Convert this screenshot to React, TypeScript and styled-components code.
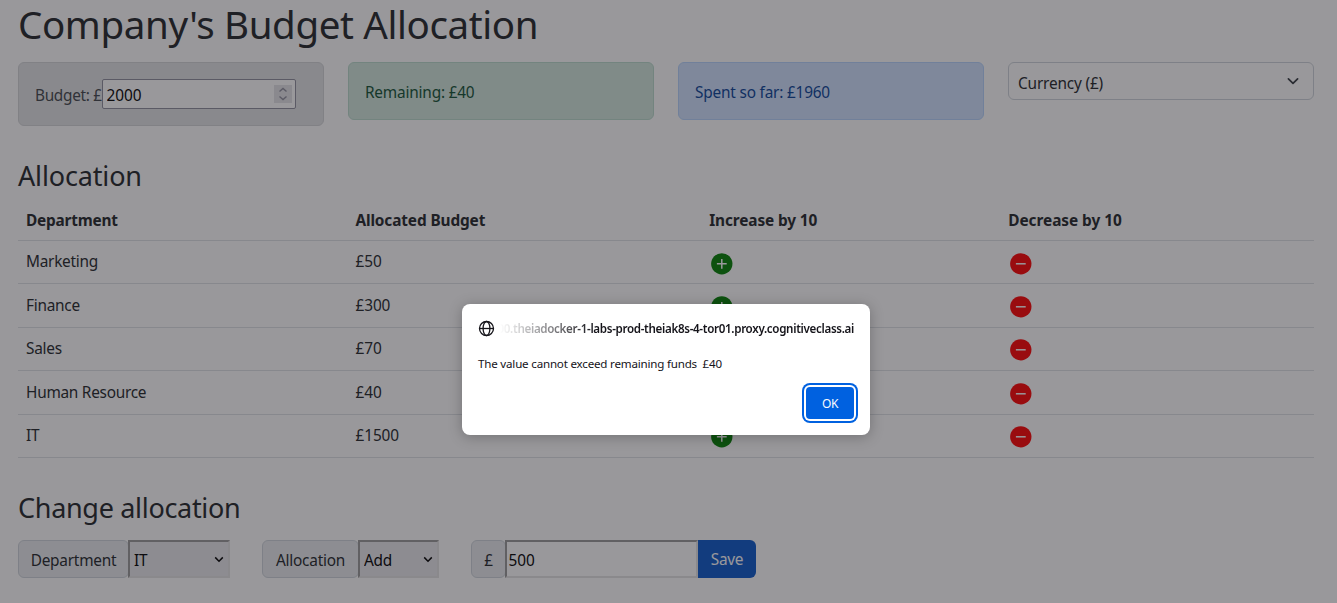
import React from "react";
import styled, { createGlobalStyle } from "styled-components";

const Global = createGlobalStyle`
  *, *::before, *::after { box-sizing: border-box; }
  html, body { margin: 0; height: 603px; overflow: hidden; background: #fff; }
  body {
    font-family: "Noto Sans", "Open Sans", sans-serif;
    font-size: 15.4px;
    line-height: 24px;
    letter-spacing: -0.24px;
    color: #212529;
  }
  input, select, button { font: inherit; letter-spacing: inherit; }
`;

const Page = styled.main`
  width: 1296px;
  margin-left: 18px;
`;

const Title = styled.h1`
  margin: 0 0 14px;
  font-size: 38.5px;
  font-weight: 400;
  line-height: 48px;
  letter-spacing: -0.38px;
  white-space: nowrap;
`;

const Section = styled.h3<{ $top: number; $bottom: number; $spacing: number }>`
  margin: ${(p) => p.$top}px 0 ${(p) => p.$bottom}px;
  font-size: 27px;
  font-weight: 400;
  line-height: 33.6px;
  letter-spacing: ${(p) => p.$spacing}px;
`;

const Summary = styled.div`
  display: grid;
  grid-template-columns: repeat(4, 306px);
  gap: 24px;
  align-items: start;
`;

const tones = {
  secondary: { bg: "#e2e3e5", border: "#d3d6d8", text: "#41464b" },
  success: { bg: "#d1e7dd", border: "#badbcc", text: "#0f5132" },
  primary: { bg: "#cfe2ff", border: "#b6d4fe", text: "#084298" },
};

const Alert = styled.div<{ $tone: keyof typeof tones; $height: number }>`
  display: flex;
  align-items: center;
  height: ${(p) => p.$height}px;
  padding: 4px 16px 0;
  border: 1px solid ${(p) => tones[p.$tone].border};
  border-radius: 6px;
  background: ${(p) => tones[p.$tone].bg};
  color: ${(p) => tones[p.$tone].text};
  letter-spacing: -0.2px;
  white-space: nowrap;
`;

const BudgetLabel = styled.span`
  width: 67px;
  letter-spacing: -0.33px;
`;

const BudgetField = styled.span`
  display: flex;
  align-items: center;
  width: 194px;
  height: 30px;
  margin-top: -4px;
  padding: 0 3px;
  border: 1px solid #8f8f9d;
  border-radius: 2px;
  background: #fff;
  color: #000;
`;

const BareInput = styled.input`
  flex: 1;
  min-width: 0;
  padding: 3px 0 0 0.6px;
  border: 0;
  outline: 0;
  background: transparent;
  color: #000;
  letter-spacing: -0.1px;
`;

const Spinner = styled.span`
  display: flex;
  width: 18px;
  height: 18px;
  background: #e4e4e8;
`;

const CurrencySelect = styled.div`
  display: flex;
  align-items: center;
  justify-content: space-between;
  height: 38px;
  padding: 5px 12px 0 9px;
  border: 1px solid #ced4da;
  border-radius: 6px;
  letter-spacing: -0.18px;
  svg { margin-top: -6px; }
`;

const Table = styled.table`
  width: 1296px;
  border-collapse: separate;
  border-spacing: 0;
  table-layout: fixed;
`;
const Head = styled.th<{ $width: number; $spacing: number }>`
  width: ${(p) => p.$width}px;
  height: 41.5px;
  padding: 3px 8px 0;
  border-bottom: 1px solid #dee2e6;
  text-align: left;
  font-weight: 700;
  font-size: 15.4px;
  letter-spacing: ${(p) => p.$spacing}px;
`;
const Cell = styled.td<{ $money?: boolean }>`
  height: 43.4px;
  padding: 0.4px 8px 0;
  border-bottom: 1px solid #dee2e6;
  letter-spacing: ${(p) => (p.$money ? "-0.06px" : "-0.27px")};
  svg { display: block; margin-top: 2px; }
`;

const Form = styled.div`
  display: flex;
  height: 38px;
`;
const Group = styled.div<{ $gap?: number }>`
  display: flex;
  margin-right: ${(p) => p.$gap ?? 0}px;
`;
const Addon = styled.label<{ $width: number }>`
  display: flex;
  align-items: center;
  justify-content: center;
  width: ${(p) => p.$width}px;
  padding-top: 3px;
  border: 1px solid #ced4da;
  border-radius: 6px;
  background: #e9ecef;
`;
const Field = styled.div<{ $width: number; $select?: boolean }>`
  display: flex;
  align-items: center;
  width: ${(p) => p.$width}px;
  margin-left: -1px;
  padding: 0 4px 0 ${(p) => (p.$select ? 2 : 1)}px;
  border: 2px solid;
  border-color: #999 #e3e3e3 #e3e3e3 #999;
  background: ${(p) => (p.$select ? "#e9e9ed" : "#fff")};
`;
const BareSelect = styled.select`
  flex: 1;
  min-width: 0;
  appearance: none;
  padding: 3px 2px 0;
  border: 0;
  outline: 0;
  background: transparent;
  color: #000;
`;
const SaveButton = styled.button`
  width: 58px;
  padding: 2px 0 0;
  border: 0;
  border-radius: 0 6px 6px 0;
  background: #0a58ca;
  color: #fff;
`;

const Backdrop = styled.div`
  position: absolute;
  inset: 0;
  height: 603px;
  background: rgba(28, 27, 34, 0.45);
`;
const Dialog = styled.div`
  position: absolute;
  left: 462px;
  top: 304px;
  display: flex;
  flex-direction: column;
  width: 408px;
  height: 131px;
  padding: 16px;
  border-radius: 8px;
  background: #fff;
  color: #15141a;
  font-size: 11.6px;
  line-height: 16px;
  white-space: pre;
  box-shadow: 0 2px 14px rgba(0, 0, 0, 0.25);
`;
const Origin = styled.div`
  display: flex;
  align-items: center;
  justify-content: space-between;
  height: 17px;
`;
const Host = styled.div`
  display: flex;
  justify-content: flex-end;
  width: 354px;
  overflow: hidden;
  font-weight: 600;
  letter-spacing: -0.32px;
  mask-image: linear-gradient(to right, transparent 0, #000 96px);
`;
const Message = styled.div`
  margin-top: 19px;
  letter-spacing: -0.2px;
`;
const OkButton = styled.button`
  align-self: flex-end;
  width: 48px;
  height: 32px;
  margin: 15px 0 0;
  padding: 1px 0 0;
  border: 0;
  border-radius: 4px;
  background: #0061e0;
  color: #fbfbfe;
  font-size: 12px;
  letter-spacing: -0.4px;
  box-shadow: 0 0 0 2px #fff, 0 0 0 4px #0061e0;
`;

const CircleIcon = ({ plus }: { plus?: boolean }) => (
  <svg width="25.6" height="25.6" viewBox="0 0 24 24">
    <circle cx="12" cy="12" r="10" fill={plus ? "green" : "red"} />
    <path
      d={plus ? "M7.4 11.3h3.9V7.4h1.4v3.9h3.9v1.4h-3.9v3.9h-1.4v-3.9H7.4z" : "M7.4 11.3h9.2v1.4H7.4z"}
      fill="#fff"
    />
  </svg>
);

const SelectArrow = () => (
  <svg width="10" height="8" viewBox="0 0 10 8" fill="none" stroke="#000" strokeWidth="1.5">
    <path d="M1.2 2.4L5 6.2l3.8-3.8" />
  </svg>
);

const rows = [
  ["Marketing", "£50"],
  ["Finance", "£300"],
  ["Sales", "£70"],
  ["Human Resource", "£40"],
  ["IT", "£1500"],
];

export default function App() {
  return (
    <>
      <Global />
      <Page>
        <Title>Company's Budget Allocation</Title>
        <Summary>
          <Alert $tone="secondary" $height={64}>
            <BudgetLabel>Budget: £</BudgetLabel>
            <BudgetField>
              <BareInput defaultValue="2000" />
              <Spinner>
                <svg width="18" height="18" viewBox="0 0 18 18" fill="none" stroke="#8f8f9d" strokeWidth="1.4">
                  <path d="M5.5 6.5L9 3.5l3.5 3M5.5 11.5l3.5 3 3.5-3" />
                </svg>
              </Spinner>
            </BudgetField>
          </Alert>
          <Alert $tone="success" $height={58}>Remaining: £40</Alert>
          <Alert $tone="primary" $height={58}>Spent so far: £1960</Alert>
          <CurrencySelect>
            Currency (£)
            <svg width="16" height="12" viewBox="0 0 16 12" fill="none" stroke="#343a40" strokeWidth="1.7" strokeLinecap="round" strokeLinejoin="round">
              <path d="M3.4 3.8L8 8.4l4.6-4.6" />
            </svg>
          </CurrencySelect>
        </Summary>

        <Section $top={33} $bottom={7} $spacing={-0.15}>Allocation</Section>
        <Table>
          <thead>
            <tr>
              <Head $width={329.4} $spacing={-0.2}>Department</Head>
              <Head $width={353.8} $spacing={-0.12}>Allocated Budget</Head>
              <Head $width={299} $spacing={-0.12}>Increase by 10</Head>
              <Head $width={313.8} $spacing={-0.04}>Decrease by 10</Head>
            </tr>
          </thead>
          <tbody>
            {rows.map(([name, amount]) => (
              <tr key={name}>
                <Cell>{name}</Cell>
                <Cell $money>{amount}</Cell>
                <Cell><CircleIcon plus /></Cell>
                <Cell><CircleIcon /></Cell>
              </tr>
            ))}
          </tbody>
        </Table>

        <Section $top={33} $bottom={15.4} $spacing={-0.31}>Change allocation</Section>
        <Form>
          <Group $gap={32}>
            <Addon $width={111}>Department</Addon>
            <Field $width={102} $select>
              <BareSelect><option>IT</option></BareSelect>
              <SelectArrow />
            </Field>
          </Group>
          <Group $gap={32}>
            <Addon $width={97}>Allocation</Addon>
            <Field $width={81} $select>
              <BareSelect><option>Add</option></BareSelect>
              <SelectArrow />
            </Field>
          </Group>
          <Group>
            <Addon $width={35}>£</Addon>
            <Field $width={193}><BareInput defaultValue="500" /></Field>
            <SaveButton>Save</SaveButton>
          </Group>
        </Form>
      </Page>
      <Backdrop />
      <Dialog>
        <Origin>
          <svg width="17" height="17" viewBox="0 0 17 17" fill="none" stroke="#15141a" strokeWidth="1.3">
            <circle cx="8.5" cy="8.5" r="7" />
            <ellipse cx="8.5" cy="8.5" rx="3.4" ry="7" />
            <path d="M1.5 8.5h14" />
          </svg>
          <Host>00.theiadocker-1-labs-prod-theiak8s-4-tor01.proxy.cognitiveclass.ai</Host>
        </Origin>
        <Message>{"The value cannot exceed remaining funds  £40"}</Message>
        <OkButton>OK</OkButton>
      </Dialog>
    </>
  );
}
